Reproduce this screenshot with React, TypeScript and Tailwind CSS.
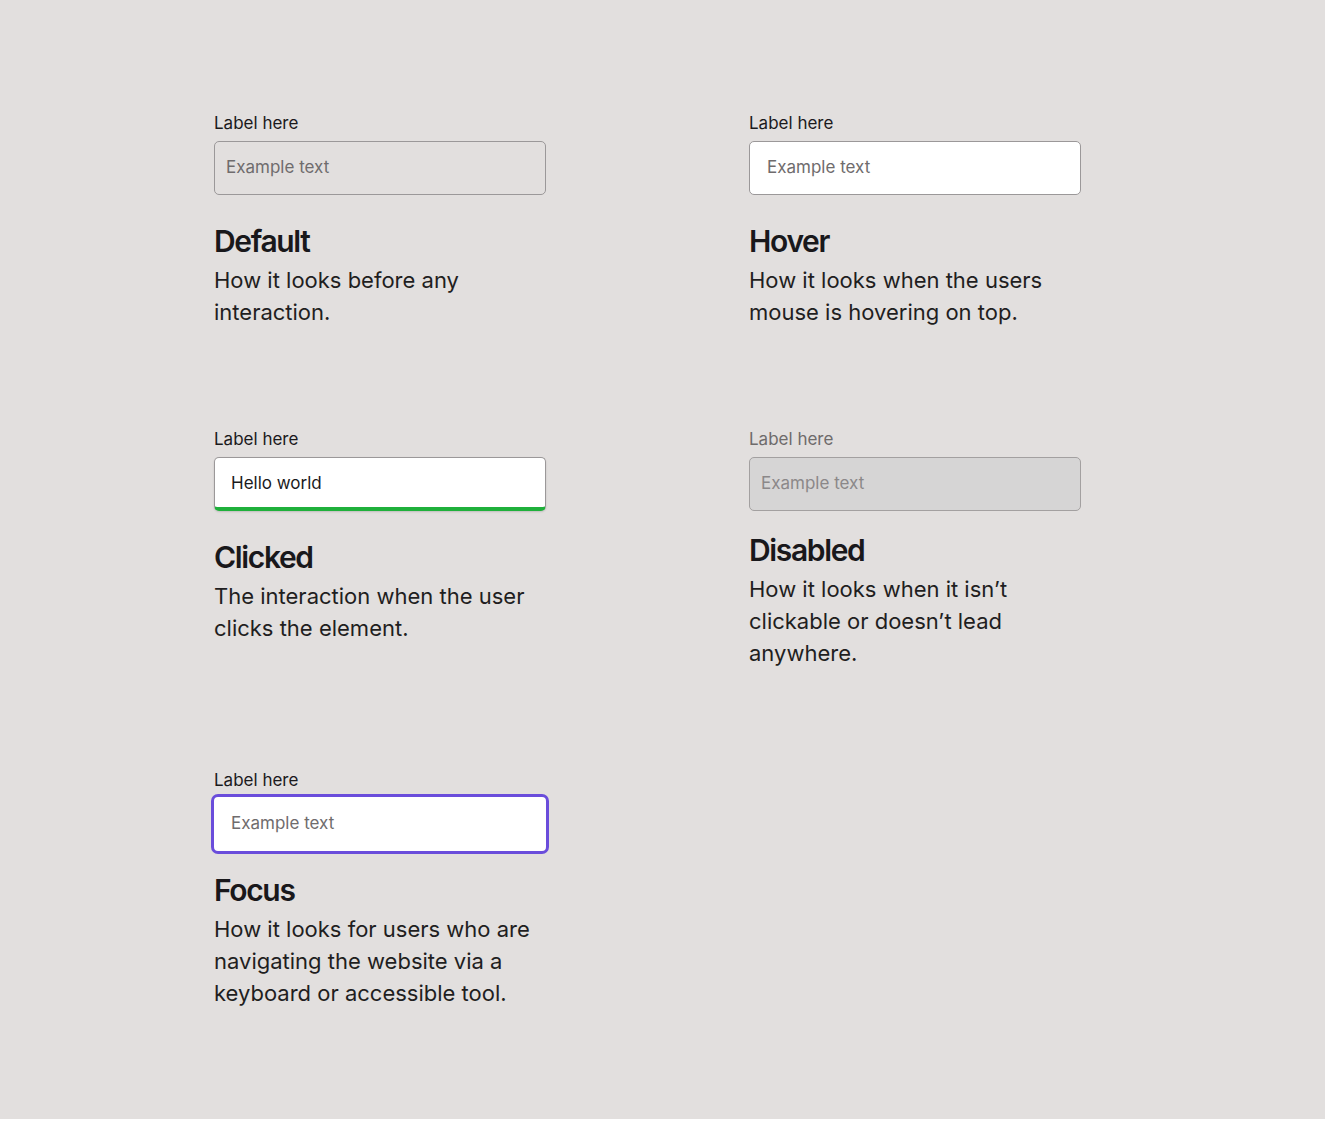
const font = { fontFamily: "Inter, 'Noto Sans', sans-serif" }

function Label({ muted }: { muted?: boolean }) {
  return (
    <div className={`text-[17px] leading-6 ${muted ? "text-[#6e6b6b]" : "text-[#1b1a1c]"}`}>Label here</div>
  )
}

function Copy({ title, lines, mt }: { title: string; lines: string[]; mt: string }) {
  return (
    <div className={mt}>
      <h2 className="text-[30px] leading-[38px] font-semibold tracking-[-0.045em] text-[#19181b]">{title}</h2>
      <p className="mt-[4px] text-[22px] leading-8 text-[#1f1e21]">
        {lines.map((l, i) => (
          <span key={i} className="block">
            {l}
          </span>
        ))}
      </p>
    </div>
  )
}

export default function App() {
  return (
    <div className="min-h-screen bg-white" style={font}>
      <div className="h-[1119px] bg-[#e2dfde] pt-[111px] pl-[214px]">
        <div className="grid grid-cols-[332px_332px] gap-x-[203px] gap-y-[99px] items-start">
          {/* Default */}
          <div>
            <Label />
            <div className="mt-[6px] h-[54px] rounded-[5px] border-[1.5px] border-[#9b9899] flex items-center px-[11px] text-[17px] text-[#6f6c6d]">
              Example text
            </div>
            <Copy title="Default" lines={["How it looks before any", "interaction."]} mt="mt-[27px]" />
          </div>

          {/* Hover */}
          <div>
            <Label />
            <div className="mt-[6px] h-[54px] rounded-[5px] border-[1.5px] border-[#9b9899] bg-white flex items-center px-[17px] text-[17px] text-[#6f6c6d]">
              Example text
            </div>
            <Copy title="Hover" lines={["How it looks when the users", "mouse is hovering on top."]} mt="mt-[27px]" />
          </div>

          {/* Clicked */}
          <div>
            <Label />
            <div className="mt-[6px] h-[54px] rounded-[5px] border border-[#9b9899] border-b-4 border-b-[#1fb03b] bg-white flex items-center px-[16px] pt-[3px] text-[17px] text-[#1b1a1c] shadow-[0_1px_2px_rgba(0,0,0,0.15)]">
              Hello world
            </div>
            <Copy title="Clicked" lines={["The interaction when the user", "clicks the element."]} mt="mt-[27px]" />
          </div>

          {/* Disabled */}
          <div>
            <Label muted />
            <div className="mt-[6px] h-[54px] rounded-[5px] border-[1.5px] border-[#a3a0a0] bg-[#d6d5d5] flex items-center px-[11px] text-[17px] text-[#8b8889]">
              Example text
            </div>
            <Copy
              title="Disabled"
              lines={["How it looks when it isn\u2019t", "clickable or doesn\u2019t lead", "anywhere."]}
              mt="mt-[20px]"
            />
          </div>

          {/* Focus */}
          <div>
            <Label />
            <div className="mt-[2px] -mx-[3px] h-[60px] rounded-[7px] border-[3px] border-[#6a4ddb] bg-white flex items-center px-[17px] text-[17px] text-[#6f6c6d]">
              Example text
            </div>
            <Copy
              title="Focus"
              lines={["How it looks for users who are", "navigating the website via a", "keyboard or accessible tool."]}
              mt="mt-[17px]"
            />
          </div>
        </div>
      </div>
    </div>
  )
}
